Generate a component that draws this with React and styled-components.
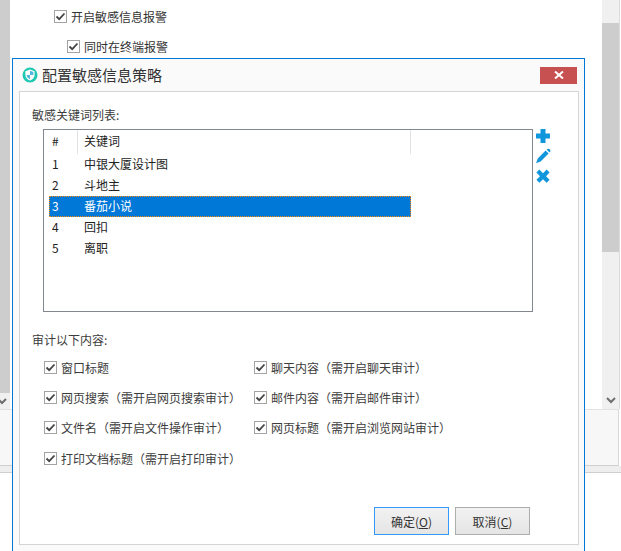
import React from "react";
import styled, { createGlobalStyle } from "styled-components";

const FONT = `"Noto Sans CJK SC", "Noto Sans", sans-serif`;

const GlobalStyle = createGlobalStyle`
  html, body {
    margin: 0;
    padding: 0;
    background: #fff;
  }
  body {
    font-family: ${FONT};
    font-size: 12px;
    color: #333;
  }
`;

const Page = styled.div`
  position: relative;
  width: 621px;
  height: 551px;
  overflow: hidden;
  background: #fff;
`;

const Behind = styled.div`
  display: flex;
  height: 409px;
`;

const LeftRail = styled.div`
  width: 10px;
  display: flex;
  flex-direction: column;
`;

const LeftThumb = styled.div`
  height: 393px;
  background: #cdcdcd;
`;

const RailFoot = styled.div`
  flex: 1;
  background: #f0f0f0;
  display: flex;
  align-items: center;
`;

const BehindContent = styled.div`
  flex: 1;
  padding-top: 7px;
`;

const BehindRow = styled.label`
  display: flex;
  align-items: center;
  gap: 4px;
  height: 18px;
  margin-left: ${(p) => p.$indent}px;
  margin-bottom: 12px;
`;

const RightRail = styled.div`
  width: 17px;
  margin-right: 1px;
  display: flex;
  flex-direction: column;
  background: #f0f0f0;
  border-right: 1px solid #dcdcdc;
`;

const RailCap = styled.div`
  height: 23px;
  background: #f0f0f0;
`;

const RightThumb = styled.div`
  height: 229px;
  background: #cdcdcd;
`;

const RailGap = styled.div`
  flex: 1;
`;

const RailArrow = styled.div`
  height: 17px;
  display: flex;
  align-items: center;
  justify-content: center;
`;

const FooterPanel = styled.div`
  height: 57px;
  width: 619px;
  box-sizing: border-box;
  background: #f7f7f7;
  border-top: 1px solid #e2e2e2;
  border-bottom: 1px solid #d0d0d0;
  border-right: 1px solid #d8d8d8;
`;

const FooterBand = styled.div`
  height: 7px;
  box-sizing: border-box;
  background: #eeeeee;
  border-bottom: 1px solid #cfcfcf;
`;

const Dialog = styled.div`
  position: absolute;
  left: 12px;
  top: 58px;
  width: 573px;
  height: 520px;
  box-sizing: border-box;
  background: #fafafa;
  border: 1px solid #0078d7;
  padding: 0 6px;
`;

const TitleBar = styled.div`
  height: 32px;
  display: flex;
  align-items: center;
  padding-left: 3px;
  gap: 4px;
`;

const Title = styled.div`
  flex: 1;
  font-size: 15px;
  color: #333;
  line-height: 20px;
`;

const CloseButton = styled.button`
  width: 37px;
  height: 17px;
  margin-right: 1px;
  padding: 0;
  border: 0;
  background: #c75050;
  display: flex;
  align-items: center;
  justify-content: center;
`;

const Panel = styled.div`
  width: 560px;
  height: 454px;
  box-sizing: border-box;
  background: #fff;
  border: 1px solid #d4d4d4;
  padding: 14px 12px 0;
  display: flex;
  flex-direction: column;
`;

const SectionLabel = styled.div`
  font-size: 12px;
  line-height: 18px;
  color: #3c3c3c;
`;

const ListRow = styled.div`
  display: flex;
  margin: 5px 0 0 11px;
  gap: 2px;
`;

const ListBox = styled.div`
  width: 490px;
  height: 183px;
  box-sizing: border-box;
  border: 1px solid #828790;
  background: #fff;
  padding-left: 5px;
`;

const HeadRow = styled.div`
  display: grid;
  grid-template-columns: 29px 333px;
  height: 24px;
  align-items: stretch;
`;

const HeadCell = styled.div`
  padding: 0 0 3px ${(p) => p.$pad}px;
  display: flex;
  align-items: center;
  border-right: 1px solid #e3e3e3;
  color: #222;
`;

const Row = styled.div`
  display: grid;
  grid-template-columns: 28px 1fr;
  width: 362px;
  height: 21px;
  box-sizing: border-box;
  align-items: center;
  padding-bottom: 2px;
  color: ${(p) => (p.$selected ? "#fff" : "#222")};
  background: ${(p) => (p.$selected ? "#0078d7" : "transparent")};
  border: 1px ${(p) => (p.$selected ? "dotted #ff8a00" : "solid transparent")};
`;

const RowNum = styled.span`
  padding-left: 2px;
`;

const RowText = styled.span`
  padding-left: 6px;
`;

const Tools = styled.div`
  display: flex;
  flex-direction: column;
  gap: 4px;
  margin-top: -1px;
`;

const ToolIcon = styled.svg`
  display: block;
  width: 16px;
  height: 16px;
  fill: #1296db;
`;

const AuditLabel = styled(SectionLabel)`
  margin-top: 19px;
`;

const CheckGrid = styled.div`
  display: grid;
  grid-template-columns: 210px 1fr;
  grid-auto-rows: 30.33px;
  margin: 3px 0 0 12px;
  align-items: center;
`;

const CheckRow = styled.label`
  display: flex;
  align-items: center;
  gap: 4px;
  color: #3c3c3c;
  white-space: nowrap;
`;

const Box = styled.span`
  width: 13px;
  height: 13px;
  box-sizing: border-box;
  flex: none;
  background: #fff;
  border: 1px solid #a3a3a3;
  display: flex;
  align-items: center;
  justify-content: center;
`;

const ButtonRow = styled.div`
  display: flex;
  justify-content: flex-end;
  gap: 6px;
  margin-top: 34px;
  padding-right: 36px;
`;

const Button = styled.button`
  width: 75px;
  height: 28px;
  box-sizing: border-box;
  padding: 0;
  font-family: ${FONT};
  font-size: 12px;
  color: #333;
  background: linear-gradient(#f2f2f2, #e5e5e5);
  border: 1px solid ${(p) => (p.$primary ? "#3399ff" : "#adadad")};
`;

const Check = () => (
  <Box>
    <svg width="11" height="11" viewBox="0 0 11 11">
      <path d="M1.5 5.5 L4.2 8.2 L9.5 2.5" fill="none" stroke="#444" strokeWidth="1.8" />
    </svg>
  </Box>
);

const Chevron = () => (
  <svg width="10" height="7" viewBox="0 0 10 7">
    <path d="M1 1 L5 5 L9 1" fill="none" stroke="#6e6e6e" strokeWidth="2" />
  </svg>
);

const ClippedChevron = () => (
  <svg width="7" height="7" viewBox="3 0 7 7">
    <path d="M1 1 L5 5 L9 1" fill="none" stroke="#6e6e6e" strokeWidth="2" />
  </svg>
);

const ShieldLogo = () => (
  <svg width="16" height="16" viewBox="0 0 16 16">
    <circle cx="8" cy="8" r="7.5" fill="#1fc9b1" />
    <path d="M8 2.6 L12.6 4.2 V8 C12.6 10.6 10.4 12.6 8 13.6 C5.6 12.6 3.4 10.6 3.4 8 V4.2 Z" fill="#fff" />
    <path d="M8 3.8 L11.4 5 V8 H8 Z M8 8 V12.2 C6.2 11.4 4.7 10 4.6 8 Z" fill="#4fb6dc" />
  </svg>
);

const keywords = ["中银大厦设计图", "斗地主", "番茄小说", "回扣", "离职"];

const audits = [
  "窗口标题",
  "聊天内容（需开启聊天审计）",
  "网页搜索（需开启网页搜索审计）",
  "邮件内容（需开启邮件审计）",
  "文件名（需开启文件操作审计）",
  "网页标题（需开启浏览网站审计）",
  "打印文档标题（需开启打印审计）",
];

export default function App() {
  return (
    <Page>
      <GlobalStyle />
      <Behind>
        <LeftRail>
          <LeftThumb />
          <RailFoot>
            <ClippedChevron />
          </RailFoot>
        </LeftRail>
        <BehindContent>
          <BehindRow $indent={44}>
            <Check />
            开启敏感信息报警
          </BehindRow>
          <BehindRow $indent={57}>
            <Check />
            同时在终端报警
          </BehindRow>
        </BehindContent>
        <RightRail>
          <RailCap />
          <RightThumb />
          <RailGap />
          <RailArrow>
            <Chevron />
          </RailArrow>
        </RightRail>
      </Behind>
      <FooterPanel />
      <FooterBand />

      <Dialog>
        <TitleBar>
          <ShieldLogo />
          <Title>配置敏感信息策略</Title>
          <CloseButton aria-label="关闭">
            <svg width="10" height="8" viewBox="0 0 10 8">
              <path d="M1 0.5 L9 7.5 M9 0.5 L1 7.5" stroke="#fff" strokeWidth="2" />
            </svg>
          </CloseButton>
        </TitleBar>
        <Panel>
          <SectionLabel>敏感关键词列表:</SectionLabel>
          <ListRow>
            <ListBox>
              <HeadRow>
                <HeadCell $pad={3}>#</HeadCell>
                <HeadCell $pad={6}>关键词</HeadCell>
              </HeadRow>
              {keywords.map((word, i) => (
                <Row key={word} $selected={i === 2}>
                  <RowNum>{i + 1}</RowNum>
                  <RowText>{word}</RowText>
                </Row>
              ))}
            </ListBox>
            <Tools>
              <ToolIcon viewBox="0 0 16 16">
                <path d="M5.5 1 H10.5 V5.5 H15 V10.5 H10.5 V15 H5.5 V10.5 H1 V5.5 H5.5 Z" />
              </ToolIcon>
              <ToolIcon viewBox="0 0 16 16">
                <path d="M10.6 2.6 L13.6 5.6 L5.6 13.4 L1 15.2 L2.8 10.4 Z M11.6 1.7 C12.8 0.5 14.2 0.7 15 1.5 C15.7 2.4 15.5 3.4 14.6 4.6 Z" />
              </ToolIcon>
              <ToolIcon viewBox="0 0 16 16">
                <path d="M4.4 1.6 L8 5.2 L11.6 1.6 L14.6 4.6 L11 8.2 L14.6 11.8 L11.6 14.8 L8 11.2 L4.4 14.8 L1.4 11.8 L5 8.2 L1.4 4.6 Z" />
              </ToolIcon>
            </Tools>
          </ListRow>
          <AuditLabel>审计以下内容:</AuditLabel>
          <CheckGrid>
            {audits.map((text) => (
              <CheckRow key={text}>
                <Check />
                {text}
              </CheckRow>
            ))}
          </CheckGrid>
          <ButtonRow>
            <Button $primary>
              确定(<u>O</u>)
            </Button>
            <Button>
              取消(<u>C</u>)
            </Button>
          </ButtonRow>
        </Panel>
      </Dialog>
    </Page>
  );
}
